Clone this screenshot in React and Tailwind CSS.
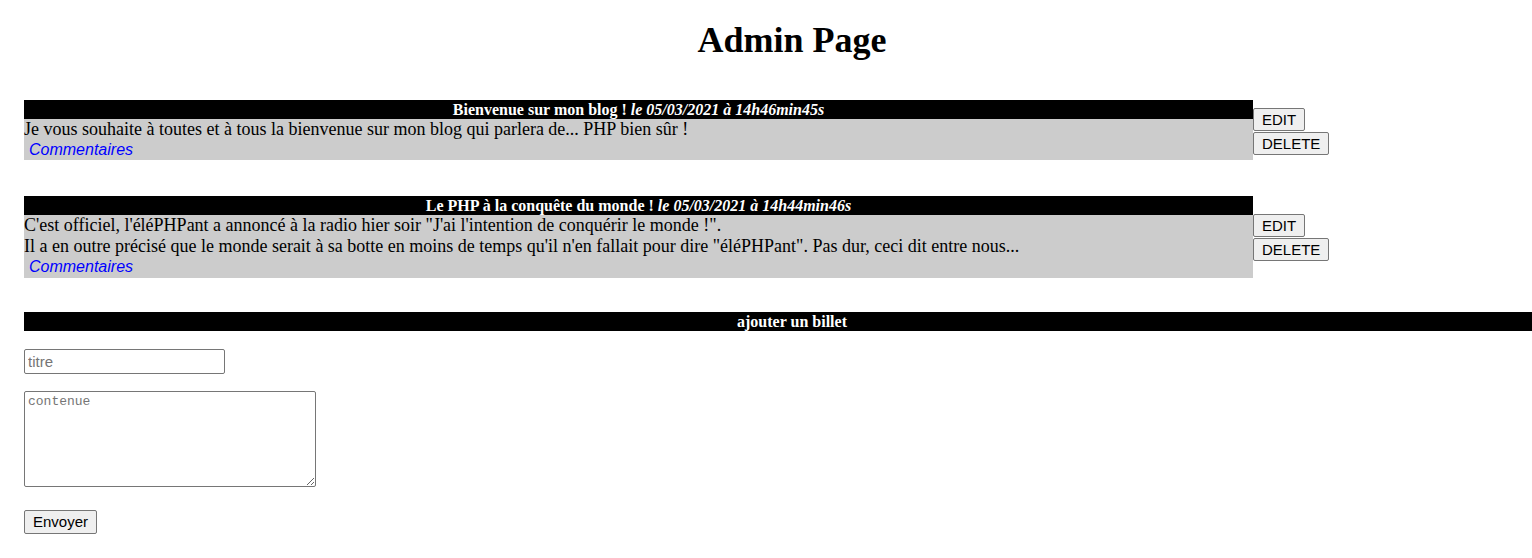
const posts = [
  {
    title: 'Bienvenue sur mon blog !',
    date: 'le 05/03/2021 à 14h46min45s',
    lines: ['Je vous souhaite à toutes et à tous la bienvenue sur mon blog qui parlera de... PHP bien sûr !'],
  },
  {
    title: 'Le PHP à la conquête du monde !',
    date: 'le 05/03/2021 à 14h44min46s',
    lines: [
      'C\'est officiel, l\'éléPHPant a annoncé à la radio hier soir "J\'ai l\'intention de conquérir le monde !".',
      'Il a en outre précisé que le monde serait à sa botte en moins de temps qu\'il n\'en fallait pour dire "éléPHPant". Pas dur, ceci dit entre nous...',
    ],
  },
];

const serif = 'font-["Liberation_Serif","Times_New_Roman",serif]';
const sans = 'font-["Liberation_Sans",Arial,sans-serif]';

function Btn({ children }) {
  return (
    <button
      className={`${sans} block bg-[#efefef] border border-[#767676] rounded-[2px] px-[8px] py-[2px] text-[15px] leading-[17px] text-black`}
    >
      {children}
    </button>
  );
}

function Post({ post, first }) {
  return (
    <div className={`flex items-center ${first ? 'mt-[39px]' : 'mt-[36px]'}`}>
      <div className="w-[1229px]">
        {/* header bar */}
        <div className="h-[19px] bg-black text-white text-center text-[16px] leading-[19px] font-bold">
          {post.title} <i>{post.date}</i>
        </div>
        <div className="bg-[#cccccc] text-[18px] leading-[20.7px] text-black">
          {post.lines.map((l, i) => (
            <div key={i}>{l}</div>
          ))}
          <div className={`${sans} italic text-[16px] pl-[5px] text-[#0000ff]`}>Commentaires</div>
        </div>
      </div>
      <div className="flex flex-col items-start gap-[1px] pt-[2px]">
        <Btn>EDIT</Btn>
        <Btn>DELETE</Btn>
      </div>
    </div>
  );
}

export default function App() {
  return (
    <div className={`min-h-screen bg-white overflow-hidden ${serif}`}>
      <div className="ml-[24px] w-[1536px]">
        <h1 className="pt-[20px] text-center text-[36px] leading-[41px] font-bold text-black">Admin Page</h1>

        {posts.map((p, i) => (
          <Post key={i} post={p} first={i === 0} />
        ))}

        {/* add form */}
        <div className="mt-[34px] h-[19px] bg-black text-white text-center text-[16px] leading-[19px] font-bold">
          ajouter un billet
        </div>
        <form className="flex flex-col items-start">
          <input
            type="text"
            placeholder="titre"
            className={`${sans} mt-[18px] w-[201px] h-[25px] border border-[#767676] rounded-[2px] px-[3px] text-[15px] placeholder:text-[#757575] outline-none`}
          />
          <textarea
            placeholder="contenue"
            className="mt-[17px] w-[292px] h-[96px] border border-[#767676] rounded-[2px] px-[3px] py-[2px] text-[13px] leading-[15px] font-['Liberation_Mono','Courier_New',monospace] placeholder:text-[#757575] outline-none"
          />
          <button
            type="button"
            className={`${sans} mt-[23px] h-[24px] bg-[#efefef] border border-[#767676] rounded-[2px] px-[8px] text-[15px] leading-[17px] text-black`}
          >
            Envoyer
          </button>
        </form>
      </div>
    </div>
  );
}
